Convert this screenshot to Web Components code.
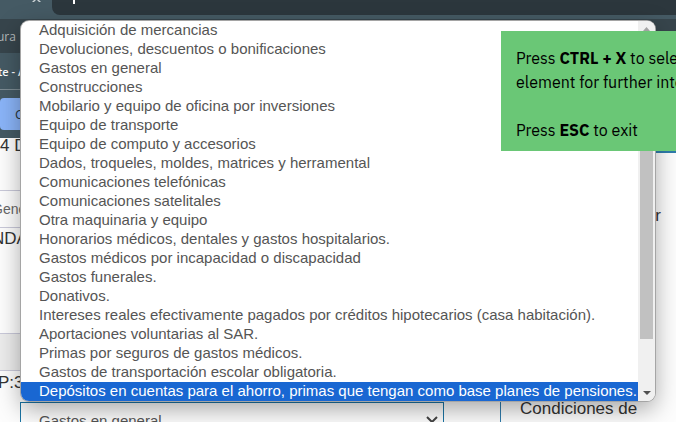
<!DOCTYPE html>
<html lang="es">
<head>
<meta charset="utf-8">
<title>Uso del comprobante</title>
<style>
html,body{height:100%;margin:0}
body{overflow:hidden;font-family:"Liberation Sans",Arial,sans-serif;background:#fff}
</style>
</head>
<body>
<capture-screen></capture-screen>
<script>
const define=(name,html)=>customElements.define(name,class extends HTMLElement{
  constructor(){
    super();
    this.attachShadow({mode:"open"}).innerHTML=html;
  }
});

define("browser-chrome",`
<style>
:host{display:block;background:#455a64;color:#fff;font-family:"Open Sans","Noto Sans",sans-serif}
.top{display:grid;grid-template-columns:52px 1fr;height:19px}
.tab svg{display:block;margin-left:32px}
.address{height:15px;background:#2c373d;border-bottom-left-radius:8px}
.address svg{display:block;margin-left:21px}
.marks{height:34px;background:#37454c;display:flex;align-items:center;color:#b3b8ba;font-size:12px}
.marks span{margin-left:-3px}
.title{height:36px;display:flex;align-items:center;font-size:11px;font-weight:600;white-space:nowrap;border-bottom:1px solid #7d8c93}
.title span{margin-left:-2px}
.tools{height:48px;display:flex;align-items:center}
button{height:32px;width:90px;border:0;border-radius:4px;background:#8ab4f8;color:#27343b;font:13px "Open Sans",sans-serif;text-align:left;padding:0 0 0 15px}
</style>
<div class="top">
  <div class="tab"><svg width="9" height="3" viewBox="0 0 9 3"><path d="M0 2 2 0H4L2 2ZM5 0H7L9 2H7Z" fill="#cbd1d4"/></svg></div>
  <div class="address"><svg width="3" height="4" viewBox="0 0 3 4"><path d="M0 0H2V4H0Z" fill="#fff"/></svg></div>
</div>
<div class="marks"><span>ura</span></div>
<div class="title"><span>te - A</span></div>
<div class="tools"><button type="button">C</button></div>`);

define("form-backdrop",`
<style>
:host{display:grid;grid-template-columns:500px 1fr;background:#fdfdfd;color:#333;font-size:17px}
.form{white-space:nowrap}
.line{display:flex;align-items:center;box-sizing:border-box;border-bottom:1px solid #c9c9d9}
.folio{height:53px;align-items:flex-start;line-height:16px}
.tab{height:37px;font-size:14px;color:#666}
.tab span,.name span{margin-left:-8px}
.name{height:106px;align-items:flex-start;line-height:22px}
.band{height:37px;background:#ececec}
.code{height:31px;border:0;align-items:flex-start;line-height:24px}
.code span{margin-left:-2px}
.picker{position:relative;margin-left:20px;width:424px;display:block}
select{display:block;box-sizing:border-box;width:100%;height:36px;appearance:none;border:1px solid #1b75a5;border-radius:0;background:#fdfdfd;padding:0 18px;font:15px "Liberation Sans",Arial,sans-serif;color:#555}
.picker svg{position:absolute;right:6px;top:14px}
.terms{border-top:2px solid #2f7cac;margin-top:13px;display:flex;flex-direction:column}
.word{padding:52px 0 0 119px;height:128px;line-height:22px}
.word span{display:block;width:42px;text-align:right}
.cond{flex:1;border-left:1px solid #2f7cac;padding:66px 0 0 19px;line-height:20px}
</style>
<div class="form">
  <div class="line folio">4 D</div>
  <div class="line tab"><span>Gene</span></div>
  <div class="line name"><span>NDA</span></div>
  <div class="line band"></div>
  <div class="line code"><span>P:3</span></div>
  <label class="picker"><select aria-label="Uso"><option>Gastos en general</option></select>
  <svg width="12" height="8" viewBox="0 0 12 8"><path d="M1 1 6 6 11 1" fill="none" stroke="#444" stroke-width="2"/></svg></label>
</div>
<div class="terms"><div class="word"><span>r</span></div><div class="cond">Condiciones de</div></div>`);

define("option-popup",`
<style>
:host{display:grid;grid-template-columns:1fr 17px;box-sizing:border-box;background:#fff;border-radius:8px;overflow:hidden;box-shadow:0 0 0 1px #a5a5a5,0 8px 24px rgba(0,0,0,.35)}
ul{list-style:none;margin:0;padding:0}
.bar{background:#f0f0f0;display:grid;grid-template-rows:16px 1fr 17px;justify-items:center}
.bar svg{align-self:center}
.thumb{width:13px;background:#c1c1c1;margin-bottom:45px}
</style>
<ul role="listbox" aria-label="Uso"><slot></slot></ul>
<div class="bar" aria-hidden="true">
<svg width="7" height="4" viewBox="0 0 7 4"><path d="M0 4 3.5 0 7 4Z" fill="#a3a3a3"/></svg>
<div class="thumb"></div>
<svg width="8" height="4" viewBox="0 0 8 4"><path d="M0 0H8L4 4Z" fill="#505050"/></svg>
</div>`);

define("popup-option",`
<style>
:host{display:block;height:19px;line-height:17px;padding-left:18px;font-size:15px;color:#555;white-space:nowrap}
:host([selected]){background:#1967d2;color:#fff}
</style><slot></slot>`);

define("key-hint",`
<style>
:host{display:block;box-sizing:border-box;background:#6ac776;color:#000;padding:15px 0 9px 15px;overflow:hidden;white-space:nowrap;font:16px/24px "IBM Plex Sans",Roboto,sans-serif}
p{margin:0 0 24px}
p:last-child{margin:0}
</style>
<p>Press <b>CTRL + X</b> to select an<br>element for further interaction</p>
<p>Press <b>ESC</b> to exit</p>`);

const uses=["Adquisición de mercancias","Devoluciones, descuentos o bonificaciones","Gastos en general","Construcciones","Mobilario y equipo de oficina por inversiones","Equipo de transporte","Equipo de computo y accesorios","Dados, troqueles, moldes, matrices y herramental","Comunicaciones telefónicas","Comunicaciones satelitales","Otra maquinaria y equipo","Honorarios médicos, dentales y gastos hospitalarios.","Gastos médicos por incapacidad o discapacidad","Gastos funerales.","Donativos.","Intereses reales efectivamente pagados por créditos hipotecarios (casa habitación).","Aportaciones voluntarias al SAR.","Primas por seguros de gastos médicos.","Gastos de transportación escolar obligatoria.","Depósitos en cuentas para el ahorro, primas que tengan como base planes de pensiones."];

define("capture-screen",`
<style>
:host{display:flex;flex-direction:column;position:relative;height:100%;overflow:hidden}
form-backdrop{flex:1}
option-popup{position:absolute;left:21px;right:21px;top:21px}
key-hint{position:absolute;left:501px;right:0;top:31px}
</style>
<browser-chrome></browser-chrome>
<form-backdrop></form-backdrop>
<option-popup>${uses.map((t,i)=>`<popup-option role="option"${i===uses.length-1?' selected aria-selected="true"':''}>${t}</popup-option>`).join("")}</option-popup>
<key-hint></key-hint>`);
</script>
</body>
</html>
